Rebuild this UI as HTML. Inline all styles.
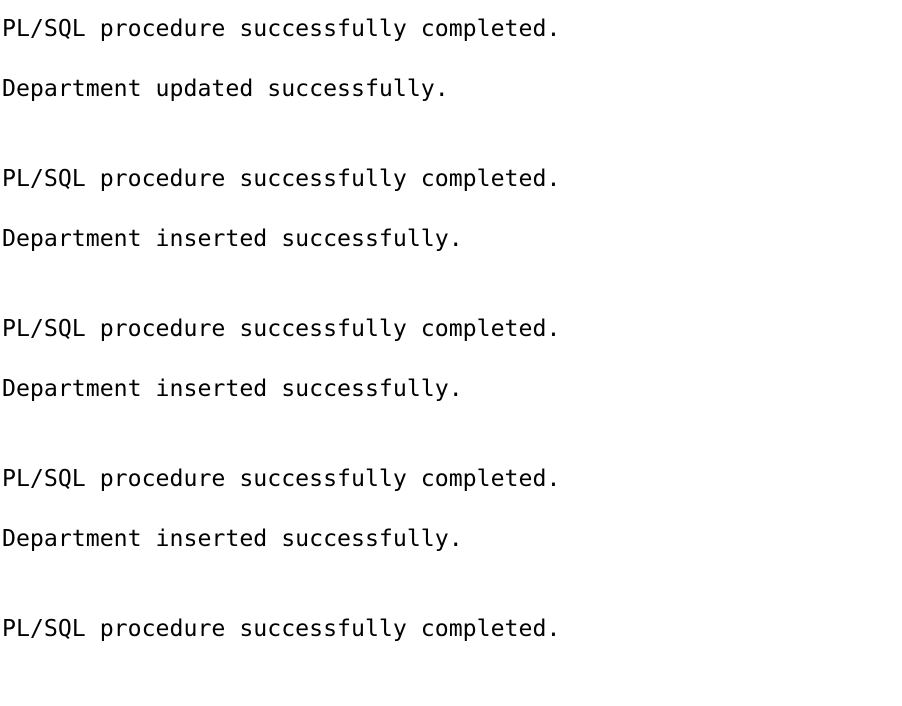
<!DOCTYPE html>
<html><head><meta charset="utf-8"><style>
html,body{margin:0;padding:0;background:#fff;width:902px;height:706px;overflow:hidden}
pre{margin:0;padding:14px 0 0 2px;font-family:"DejaVu Sans Mono","Liberation Mono",monospace;font-size:23.2px;line-height:30px;color:#000}
</style></head><body><pre>PL/SQL procedure successfully completed.

Department updated successfully.


PL/SQL procedure successfully completed.

Department inserted successfully.


PL/SQL procedure successfully completed.

Department inserted successfully.


PL/SQL procedure successfully completed.

Department inserted successfully.


PL/SQL procedure successfully completed.
</pre></body></html>
